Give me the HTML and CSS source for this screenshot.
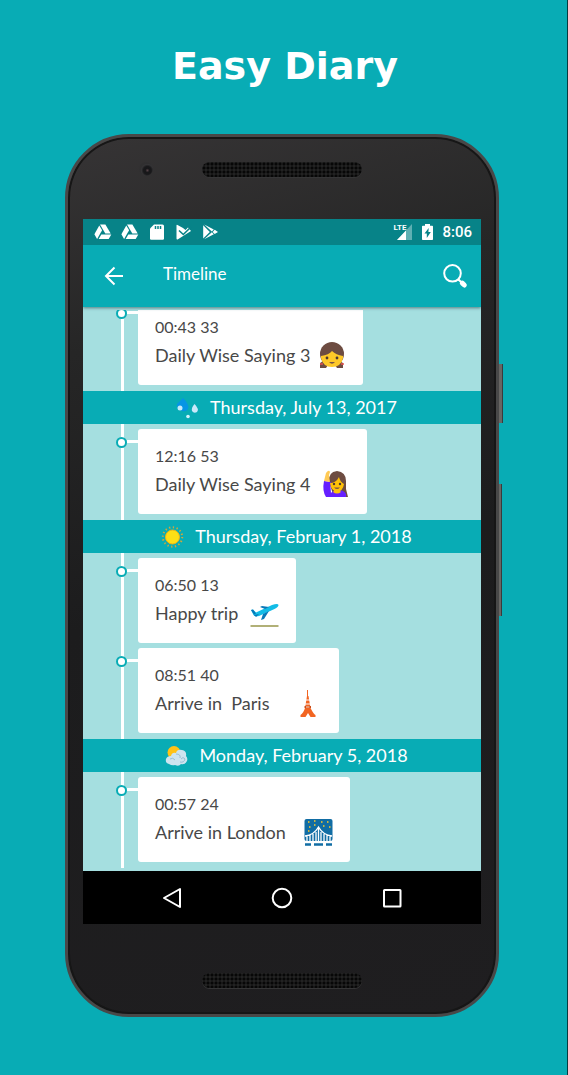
FILE: index.html
```html
<!DOCTYPE html>
<html lang="en">
<head>
<meta charset="utf-8">
<meta name="viewport" content="width=device-width, initial-scale=1">
<title>Easy Diary</title>
<link rel="stylesheet" href="styles.css">
</head>
<body>
<main class="page">
<h1 class="title">Easy Diary</h1>
<div class="phone">
  <span class="side-key power"></span><span class="side-key volume"></span>
  <div class="bezel bezel-top"><span class="camera"></span><span class="speaker"></span></div>
  <div class="screen">
    <div class="status">
      <svg width="18" height="16" viewBox="0 0 18 16" fill="#fff"><path d="M6 .5h5.400l5.300 9h-5.400z"/><path d="M5.300 1.500l2.800 4.700-5 8.800L.4 10.300z"/><path d="M7.300 10.500h10L14.700 15H4.700z"/></svg>
      <svg width="18" height="16" viewBox="0 0 18 16" fill="#fff"><path d="M6 .5h5.400l5.300 9h-5.400z"/><path d="M5.300 1.500l2.800 4.700-5 8.800L.4 10.300z"/><path d="M7.300 10.500h10L14.700 15H4.700z"/></svg>
      <svg width="18" height="16" viewBox="0 0 18 16"><path d="M6 .5h8.500a1.500 1.500 0 0 1 1.500 1.500v12.500a1.200 1.200 0 0 1-1.200 1.200H3.200A1.200 1.200 0 0 1 2 14.500V4.500z" fill="#fff"/><path d="M7.500 2v3M10 2v3M12.500 2v3" stroke="#078388" stroke-width="1.500"/></svg>
      <svg width="18" height="16" viewBox="0 0 18 16"><path d="M1.500 1.500q0-1 1-.5L8 4l2.500 2L13 3.500 16 7 3 15.200q-1.500.6-1.500-.8z" fill="#fff"/><path d="M4 6.500l4.300 4L16 3" fill="none" stroke="#078388" stroke-width="1.600"/></svg>
      <svg width="18" height="16" viewBox="0 0 18 16"><path d="M1.200 1.300v13.200l6.600-6.600z" fill="#fff"/><path d="M2.200.6l9.600 4.900-2 2zM2.200 15.200l9.600-4.900-2-2zM12.700 5.800L16 7.900l-3.300 2.100-2.100-2.100z" fill="#fff"/></svg>
      <span class="network"><span class="lte">LTE</span><svg width="16" height="16" viewBox="0 0 16 16"><path d="M15 0v16H0z" fill="#5fb0b3"/><path d="M9 6.400V16H0z" fill="#fff"/></svg></span>
      <svg width="11" height="16" viewBox="0 0 11 16"><path d="M3 0h5v1.700h2.200q.8 0 .8.800v12.700q0 .8-.8.800H.8q-.8 0-.8-.8V2.500q0-.8.8-.8H3z" fill="#fff"/><path d="M6.700 4L2.500 9.500h2.300V14l4-6H6.400z" fill="#078388"/></svg>
      <time class="clock">8:06</time>
    </div>
    <header class="appbar">
      <button class="icon-button" aria-label="Back"><svg width="20" height="20" viewBox="0 0 20 20" fill="none" stroke="#fff" stroke-width="2"><path d="M19 10H3M10.500 1.500L2 10l8.500 8.500"/></svg></button>
      <h2 class="heading">Timeline</h2>
      <button class="icon-button" aria-label="Search"><svg width="26" height="26" viewBox="0 0 26 26" fill="none" stroke="#fff" stroke-linecap="round"><circle cx="10.500" cy="10.300" r="8.300" stroke-width="2"/><path d="M16.500 16.500l3 3" stroke-width="2"/><path d="M20.300 20.200l2 1.800" stroke-width="5"/></svg></button>
    </header>
    <div class="list"><div class="viewport">
      <section class="entries first">
        <article class="entry"><span class="node"></span><div class="card"><time>00:43 33</time><p>Daily Wise Saying 3 
          <svg class="emoji" viewBox="0 0 29 29"><path d="M3 22q3-1 3-5h17q0 4 3 5v5h-6l-2-3H11l-2 3H3z" fill="#6d4c41"/><circle cx="15" cy="13" r="12" fill="#6d4c41"/><path d="M4 15q8-1 11-5 4 4 11 5v2q-2 9-11 9T4 17z" fill="#ffc928"/><circle cx="10" cy="17" r="1.400" fill="#4b3932"/><circle cx="20" cy="17" r="1.400" fill="#4b3932"/><path d="M12 21h6q-3 3.500-6 0z" fill="#795548"/><path d="M3 23h3M24 23h3" stroke="#e5524f" stroke-width="1.500"/></svg></p></div></article>
      </section>
      <h3 class="day"><svg class="weather" viewBox="0 0 30 30"><path d="M12 6q7 7 5 11-2 3-6 2-6-2-5-7z" fill="#0595e5"/><circle cx="9" cy="16" r="2.500" fill="#c3eafa"/><path d="M23.500 12q5 5 2.500 8-3 2-5-1-1-3 2.500-7z" fill="#c9e8fa"/><circle cx="17" cy="24.500" r="1.800" fill="#d6f3fb"/></svg>Thursday, July 13, 2017</h3>
      <section class="entries">
        <article class="entry"><span class="node"></span><div class="card w-saying"><time>12:16 53</time><p>Daily Wise Saying 4 
          <svg class="emoji" viewBox="0 0 29 29"><path d="M8 12Q7 2 16 1q9 1 9 10v8l2 8H13z" fill="#6d4c41"/><path d="M3 11q-2 10 2 16h20v-3q-2-4-8-4-5 0-7 3-1-6 0-11z" fill="#651fff"/><path d="M3 11l2-8q3-4 4-1l-1 3 1 7z" fill="#ffca55"/><path d="M9 13q6 0 9-6 1 5 5 7-1 7-7 8-6-1-7-9z" fill="#ffc107"/><path d="M12 22q4 3 8 0l-2-2h-4z" fill="#ffc107"/><circle cx="13" cy="14" r="1.200" fill="#4b3932"/><circle cx="19" cy="14" r="1.200" fill="#4b3932"/><path d="M13 17.500h6q-3 3-6 0z" fill="#795548"/></svg></p></div></article>
      </section>
      <h3 class="day"><svg class="weather" viewBox="0 0 30 30"><circle cx="16.500" cy="16" r="9.700" fill="none" stroke="#d2a739" stroke-width="2" stroke-dasharray="1.300 2.510"/><circle cx="16.500" cy="16" r="7" fill="#fddf16" stroke="#efb413"/></svg>Thursday, February 1, 2018</h3>
      <section class="entries">
        <article class="entry"><span class="node"></span><div class="card w-trip"><time>06:50 13</time><p>Happy trip 
          <svg class="emoji" viewBox="0 0 29 29"><path d="M.5 27h28" stroke="#9e9d55" stroke-width="1.600"/><path d="M1 11l2-.5 3 3L22 6q6-2 6.500 0 0 2-4 4L9 17q-4 1-5.500-1z" fill="#12bce6"/><path d="M1 11l2-.5 3 4-2 1zM10 8l2-1 7 1-4 2zM13 15l6-3-5 8-3 1zM4 16l5-1-3 3z" fill="#0878b8"/></svg></p></div></article>
        <article class="entry"><span class="node"></span><div class="card w-paris"><time>08:51 40</time><p>Arrive in&nbsp; Paris 
          <svg class="emoji" viewBox="0 0 29 29"><path d="M14.500 1v8" stroke="#f26522" stroke-width="1"/><path d="M14 7h1.500l2 12q3 6 5 7v2h-5l-2.500-4-2.500 4H7.500v-2q3-2 4.500-7z" fill="#f26522"/><path d="M13 11h4M12 15h5" stroke="#fff"/><path d="M11.500 18h6.500" stroke="#c94c1a" stroke-width="2"/><path d="M13 18h3.500" stroke="#ffe3d4"/></svg></p></div></article>
      </section>
      <h3 class="day"><svg class="weather" viewBox="0 0 30 30"><circle cx="14" cy="12.500" r="6.500" fill="#ffc215"/><path d="M9 24q-4-1-3-5 1-3 5-3 1-4 5-3 1-4 6-3 5 1 4 6 2 2 1 5-2 4-6 3-2 3-6 1-3 1-6-1z" fill="#cde4ef"/><path d="M10 19q3-2 5 1m1-6q5 0 4 4m0 4q4 1 5-3-2-3-4 0" fill="none" stroke="#99bfd4" stroke-width="1"/></svg>Monday, February 5, 2018</h3>
      <section class="entries">
        <article class="entry"><span class="node"></span><div class="card w-london"><time>00:57 24</time><p>Arrive in London 
          <svg class="emoji" viewBox="0 0 29 29"><rect x=".5" y="1" width="28" height="22" rx="2" fill="#116da4"/><path d="M1 18Q10 17 14.500 9 19 17 28 18M3 23v-5M6 23v-6M9 23v-7M12 23v-9M14.500 23V9M17 23v-9M20 23v-7M23 23v-6M26 23v-5" stroke="#fff" stroke-width="1.300" fill="none"/><path d="M4 4h1.500M10 3h1.500M17 4h1.500M23 4h1.500M5 9h1.500M10 7h1.500M19 8h1.500M25 9h1.500M4 13h1.500" stroke="#ffca28" stroke-width="1.500"/><path d="M1 26.500h6M10 26.500h9M22 26.500h6" stroke="#116da4" stroke-width="2.500"/></svg></p></div></article>
      </section>
    </div></div>
    <nav class="nav">
      <button aria-label="Back"><svg width="24" height="24" viewBox="0 0 24 24"><path d="M20 3v18L4 12z"/></svg></button>
      <button aria-label="Home"><svg width="24" height="24" viewBox="0 0 24 24"><circle cx="12" cy="12" r="9.300"/></svg></button>
      <button aria-label="Recent apps"><svg width="24" height="24" viewBox="0 0 24 24"><rect x="4" y="4" width="16.500" height="16.500" rx=".5"/></svg></button>
    </nav>
  </div>
  <div class="bezel bezel-bottom"><span class="speaker"></span></div>
</div>
</main>
</body>
</html>
```
FILE: styles.css
```css
* { box-sizing: border-box; }
body { margin: 0; background: #08acb5; font-family: Lato, "Open Sans", sans-serif; }
h1, h2, h3, p { margin: 0; font-weight: 400; }
button { padding: 0; border: 0; background: none; display: flex; align-items: center; justify-content: center; }
svg { display: block; flex: none; }
.page { min-height: 100vh; padding: 42px 68px 58px 65px; border-right: 1px solid #043c40; }
.title { height: 50px; margin-bottom: 42px; padding-left: 6px; line-height: 48px; text-align: center; color: #fff; font-family: "DejaVu Sans", sans-serif; font-size: 38px; font-weight: 700; white-space: nowrap; }

.phone { position: relative; padding: 0 15px; border: 3px solid #484848; border-radius: 64px; background: linear-gradient(165deg, #363435 0%, #262626 22%, #1c1c1d 50%, #1f1e20 100%); box-shadow: inset 0 0 0 2px #161616; }
.side-key { position: absolute; left: 100%; margin-left: 3px; background: #686663; border-right: 1px solid #3b3a3c; }
.power { top: 227px; width: 4px; height: 59px; }
.volume { top: 347px; width: 3px; height: 132px; }
.bezel { display: grid; grid-template-columns: 1fr 160px 1fr; }
.bezel-top { height: 82px; padding-top: 25px; }
.bezel-bottom { height: 90px; padding-top: 49px; }
.speaker { grid-column: 2; height: 15px; border-radius: 8px; background: radial-gradient(circle, #070707 1px, #222 2px) 0 0 / 4px 4px; box-shadow: 0 1px 0 #353536; }
.camera { width: 14px; height: 14px; margin-left: 56px; border-radius: 50%; background: radial-gradient(circle at 60% 60%, #58454a 0, #171719 2px, #19191b 4px, #353436 6px, #302f30 7px); }

.screen { overflow: hidden; background: #a5dfe0; }
.status { position: relative; z-index: 2; display: flex; align-items: center; gap: 9px; height: 26px; padding: 0 9px 0 11px; background: #078388; color: #fff; }
.network { display: flex; align-items: center; margin-left: auto; }
.lte { align-self: flex-start; margin-right: -9px; font: 700 8px/8px Roboto, sans-serif; }
.clock { font: 500 15px/26px Roboto, sans-serif; }
.appbar { position: relative; z-index: 1; display: flex; align-items: center; height: 62px; padding: 0 13px 0 21px; background: #08acb5; box-shadow: 0 1px 3px #547d80; color: #fff; }
.heading { flex: 1; padding: 0 0 4px 39px; font-size: 17px; line-height: 24px; }

.list { padding: 3px 0; color: #484848; font-size: 18px; }
.viewport { overflow: hidden; }
.entries { display: flex; flex-direction: column; gap: 5px; padding: 5px 0 6px 33px; background: linear-gradient(#fff, #fff) 38px 0 / 3px 100% no-repeat; }
.first { margin-top: -15px; }
.entry { display: flex; align-items: flex-start; }
.node { width: 11px; height: 11px; margin-top: 8px; border: 2px solid #08acb5; border-radius: 50%; background: #fff; }
.entry::before { content: ""; order: 1; width: 11px; height: 3px; margin-top: 11px; background: #fff; }
.card { order: 2; padding: 13px 17px 16px; border-radius: 3px; background: #fff; line-height: 28px; white-space: nowrap; }
.w-saying { min-width: 229px; }
.w-trip { min-width: 158px; }
.w-paris { min-width: 201px; }
.w-london { min-width: 212px; }
.card time { display: block; height: 28px; font-size: 16px; }
.card p { display: flex; align-items: center; justify-content: space-between; gap: 7px; height: 28px; }
.emoji { width: 29px; height: 29px; }
.day { display: flex; align-items: center; justify-content: center; gap: 9px; height: 33px; padding: 0 0 2px 4px; background: #08acb5; color: #fff; font-size: 18px; line-height: 30px; white-space: nowrap; }
.weather { width: 30px; height: 30px; }

.nav { display: flex; align-items: center; justify-content: center; gap: 86px; height: 53px; background: #000; }
.nav svg { fill: none; stroke: #fff; stroke-width: 2; stroke-linejoin: round; }
```
